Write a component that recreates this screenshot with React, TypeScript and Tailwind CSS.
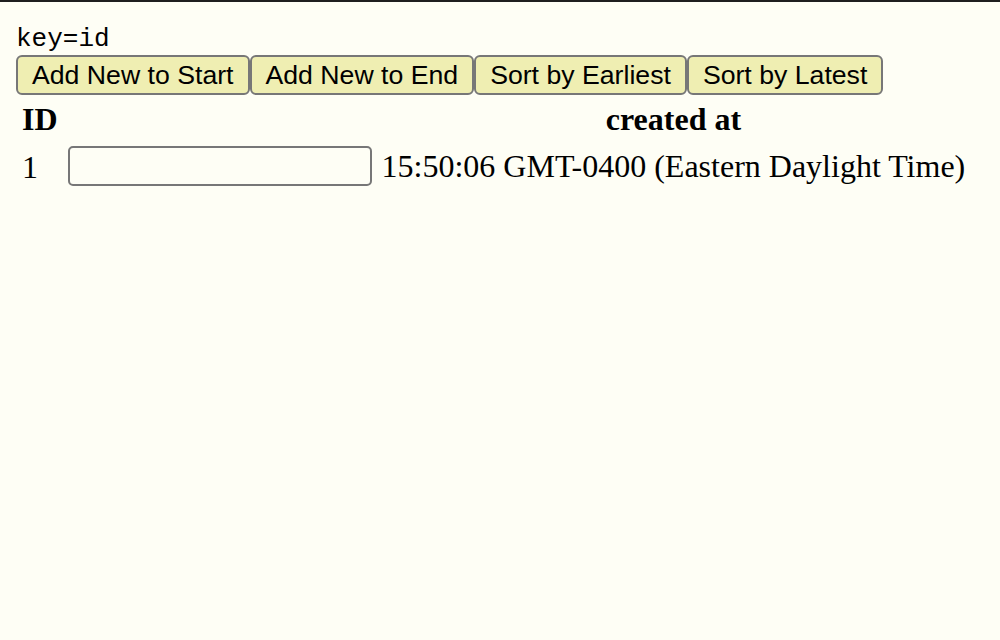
import React from "react";

export default function App() {
  return (
    <div
      className="min-h-screen w-full bg-[#fefef5] border-t-2 border-[#1f1f1f] text-black"
      style={{ fontFamily: '"Liberation Serif", "Times New Roman", serif' }}
    >
      <div className="px-[16px] pt-[22px]">
        <div
          className="h-[31px] text-[26px] leading-[30px]"
          style={{ fontFamily: '"Liberation Mono", "Courier New", monospace' }}
        >
          key=id
        </div>
        <div
          className="flex"
          style={{ fontFamily: '"Liberation Sans", Arial, sans-serif' }}
        >
          {["Add New to Start", "Add New to End", "Sort by Earliest", "Sort by Latest"].map((t) => (
            <button
              key={t}
              className="h-[40px] px-[14px] border-2 border-[#777777] rounded-[6px] bg-[#efeeb2] text-[26.67px] leading-[30px] text-black whitespace-nowrap"
            >
              {t}
            </button>
          ))}
        </div>
        <table className="border-separate border-spacing-[4px] text-[32px] leading-[37px]">
          <thead>
            <tr>
              <th className="p-[2px] font-bold text-center">ID</th>
              <th className="p-[2px]"></th>
              <th className="p-[2px] font-bold text-center">created at</th>
            </tr>
          </thead>
          <tbody>
            <tr>
              <td className="p-[2px] align-middle">1</td>
              <td className="p-[2px] align-middle">
                <input
                  type="text"
                  className="block mx-[2px] mt-[0px] mb-[2px] w-[304px] h-[40px] border-2 border-[#777777] rounded-[5px] bg-transparent outline-none"
                />
              </td>
              <td className="p-[2px] pb-[4px] align-middle whitespace-nowrap">
                15:50:06 GMT-0400 (Eastern Daylight Time)
              </td>
            </tr>
          </tbody>
        </table>
      </div>
    </div>
  );
}
